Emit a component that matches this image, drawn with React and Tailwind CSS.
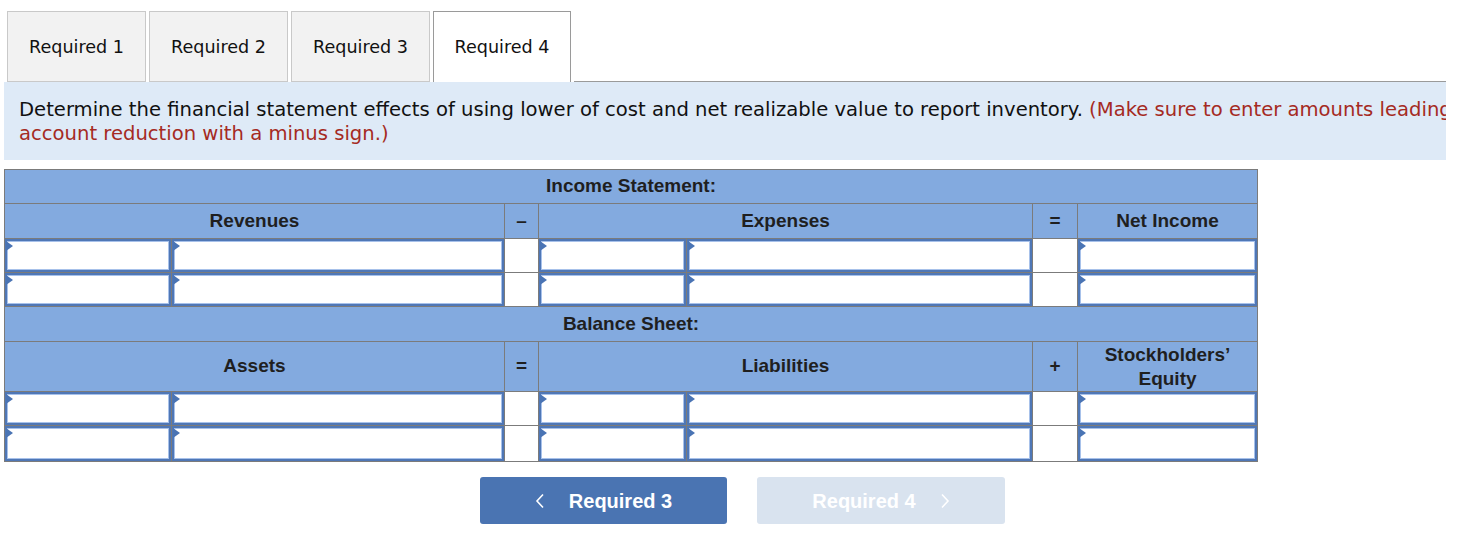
import { useState } from "react";

const tabs = ["Required 1", "Required 2", "Required 3", "Required 4"];

const InputCell = ({ last }) => (
  <td className="border border-[#7b7b7b] p-0 align-top">
    <div className={last ? "relative h-[35px] bg-[#4f77b6] p-[2px]" : "relative h-[33px] bg-[#4f77b6] p-[2px]"}>
      <div className="h-full w-full border border-[#a7c1ea] bg-white" />
      <span className="absolute left-[1px] top-[2px] h-0 w-0 border-y-[5px] border-l-[7px] border-y-transparent border-l-[#4a74b4]" />
    </div>
  </td>
);

const OpCell = () => (
  <td className="border border-[#7b7b7b] bg-white p-0" />
);

const Head = ({ children, span = 1 }) => (
  <th
    colSpan={span}
    className="border border-[#7b7b7b] bg-[#83aadf] text-center font-bold text-[#1f1f1f]"
  >
    {children}
  </th>
);

const InputRow = ({ last }) => (
  <tr className={last ? "h-[36px]" : "h-[34px]"}>
    <InputCell last={last} />
    <InputCell last={last} />
    <OpCell />
    <InputCell last={last} />
    <InputCell last={last} />
    <OpCell />
    <InputCell last={last} />
  </tr>
);

const App = () => {
  const [active, setActive] = useState(3);

  return (
    <div className="w-[1460px] h-[534px] bg-white overflow-hidden">
      {/* tabs */}
      <div className="flex items-end pt-[11px] pl-[7px] pr-[14px]">
        {tabs.map((t, i) => (
          <button
            key={t}
            onClick={() => setActive(i)}
            className={
              i === active
                ? "h-[71px] w-[138px] mr-[3px] border border-b-0 border-[#9a9a9a] bg-white text-[17.6px] text-[#111]"
                : "h-[71px] w-[139px] mr-[3px] border border-[#c9c9c9] bg-[#f2f2f2] pt-[1px] text-[17.6px] text-[#111]"
            }
            style={{ fontFamily: '"DejaVu Sans", Verdana, sans-serif' }}
          >
            {t}
          </button>
        ))}
        <div className="flex-1 border-b border-[#9a9a9a]" />
      </div>

      {/* instructions */}
      <div
        className="ml-[4px] w-[1442px] overflow-hidden bg-[#deeaf7] pl-[15px] pt-[16px] pb-[14px] text-[19.6px] leading-[24px] text-[#111]"
        style={{ fontFamily: '"DejaVu Sans", Verdana, sans-serif' }}
      >
        <p className="whitespace-nowrap">
          Determine the financial statement effects of using lower of cost and net realizable value to report inventory.{" "}
          <span className="text-[#a52a23]">
            (Make sure to enter amounts leading to an
            <br />
            account reduction with a minus sign.)
          </span>
        </p>
      </div>

      {/* statement table */}
      <table
        className="ml-[4px] mt-[9px] w-[1253px] table-fixed border-collapse text-[19px]"
        style={{ fontFamily: '"Liberation Sans", Arial, sans-serif' }}
      >
        <colgroup>
          <col className="w-[167px]" />
          <col className="w-[333px]" />
          <col className="w-[34px]" />
          <col className="w-[148px]" />
          <col className="w-[346px]" />
          <col className="w-[45px]" />
          <col className="w-[180px]" />
        </colgroup>
        <tbody>
          <tr className="h-[34px]">
            <Head span={7}>Income Statement:</Head>
          </tr>
          <tr className="h-[35px]">
            <Head span={2}>Revenues</Head>
            <Head>–</Head>
            <Head span={2}>Expenses</Head>
            <Head>=</Head>
            <Head>Net Income</Head>
          </tr>
          <InputRow />
          <InputRow />
          <tr className="h-[35px]">
            <Head span={7}>Balance Sheet:</Head>
          </tr>
          <tr className="h-[50px]">
            <Head span={2}>Assets</Head>
            <Head>=</Head>
            <Head span={2}>Liabilities</Head>
            <Head>+</Head>
            <Head>
              <span className="block leading-[24px]">
                Stockholders’
                <br />
                Equity
              </span>
            </Head>
          </tr>
          <InputRow />
          <InputRow last />
        </tbody>
      </table>

      {/* nav buttons */}
      <div
        className="mt-[15px] flex gap-[30px] pl-[480px] text-[20px] font-bold text-white"
        style={{ fontFamily: '"Liberation Sans", Arial, sans-serif' }}
      >
        <button className="flex h-[47px] w-[247px] items-center justify-center gap-[24px] rounded-[3px] bg-[#4a74b2]">
          <svg width="10" height="16" viewBox="0 0 10 16" fill="none">
            <polyline points="8,1.5 2,8 8,14.5" stroke="white" strokeWidth="1.6" />
          </svg>
          <span>Required 3</span>
        </button>
        <button className="flex h-[47px] w-[248px] items-center justify-center gap-[24px] rounded-[3px] bg-[#d9e3ef]">
          <span>Required 4</span>
          <svg width="10" height="16" viewBox="0 0 10 16" fill="none">
            <polyline points="2,1.5 8,8 2,14.5" stroke="white" strokeWidth="1.6" />
          </svg>
        </button>
      </div>
    </div>
  );
};

export default App;
